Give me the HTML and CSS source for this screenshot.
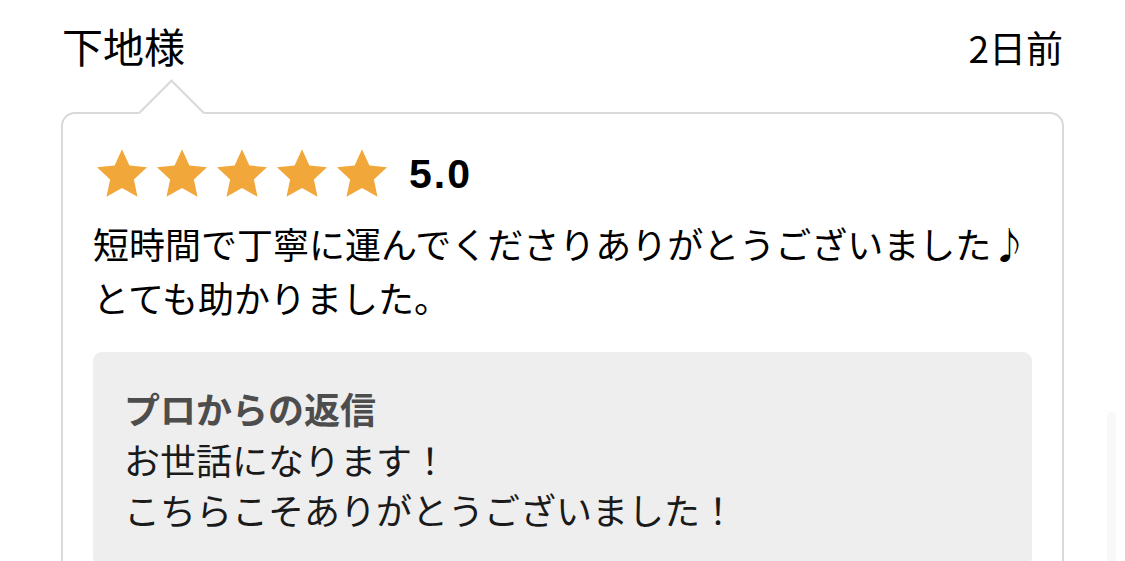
FILE: index.html
```html
<!DOCTYPE html>
<html lang="ja">
<head>
<meta charset="utf-8">
<title>Review</title>
<link rel="stylesheet" href="styles.css">
</head>
<body>
<div class="page">
  <header class="review-head">
    <span class="reviewer">下地様</span>
    <span class="date">2日前</span>
  </header>
  <section class="card">
    <span class="card-arrow"></span>
    <div class="rating">
      <div class="stars">
        <svg class="star" viewBox="1.5 1.5 21 20"><polygon points="12,1.5 15.1,8.3 22.5,9.1 17,14.2 18.5,21.5 12,17.8 5.5,21.5 7,14.2 1.5,9.1 8.9,8.3"/></svg>
        <svg class="star" viewBox="1.5 1.5 21 20"><polygon points="12,1.5 15.1,8.3 22.5,9.1 17,14.2 18.5,21.5 12,17.8 5.5,21.5 7,14.2 1.5,9.1 8.9,8.3"/></svg>
        <svg class="star" viewBox="1.5 1.5 21 20"><polygon points="12,1.5 15.1,8.3 22.5,9.1 17,14.2 18.5,21.5 12,17.8 5.5,21.5 7,14.2 1.5,9.1 8.9,8.3"/></svg>
        <svg class="star" viewBox="1.5 1.5 21 20"><polygon points="12,1.5 15.1,8.3 22.5,9.1 17,14.2 18.5,21.5 12,17.8 5.5,21.5 7,14.2 1.5,9.1 8.9,8.3"/></svg>
        <svg class="star" viewBox="1.5 1.5 21 20"><polygon points="12,1.5 15.1,8.3 22.5,9.1 17,14.2 18.5,21.5 12,17.8 5.5,21.5 7,14.2 1.5,9.1 8.9,8.3"/></svg>
      </div>
      <span class="score">5.0</span>
    </div>
    <p class="comment">短時間で丁寧に運んでくださりありがとうございました♪<br>とても助かりました。</p>
    <div class="reply">
      <p class="reply-title">プロからの返信</p>
      <p class="reply-text">お世話になります！<br>こちらこそありがとうございました！</p>
    </div>
  </section>
</div>
<div class="scroll-indicator"></div>
</body>
</html>
```

FILE: styles.css
```css
html, body {
  margin: 0;
  padding: 0;
  overflow: hidden;
  background: #ffffff;
}

body {
  position: relative;
  height: 561px;
  font-family: "Noto Sans CJK JP", "Noto Sans", sans-serif;
  color: #000000;
}

.page {
  padding: 0 61px;
}

.review-head {
  display: flex;
  justify-content: space-between;
  align-items: baseline;
  height: 78px;
  padding: 0 1px;
}

.reviewer {
  font-size: 41px;
  line-height: 60px;
  padding-top: 15px;
}

.date {
  font-size: 37px;
  line-height: 60px;
}

.card {
  position: relative;
  margin-top: 34px;
  border: 2px solid #d9d9d9;
  border-radius: 14px;
  padding: 35px 30px 40px;
  background: #ffffff;
}

.card-arrow {
  position: absolute;
  top: -25px;
  left: 85px;
  width: 47px;
  height: 47px;
  background: #ffffff;
  border-top: 2px solid #d9d9d9;
  border-left: 2px solid #d9d9d9;
  box-sizing: border-box;
  transform: rotate(45deg);
}

.rating {
  position: relative;
  display: flex;
  align-items: center;
  height: 48px;
  padding-left: 4px;
}

.stars {
  display: flex;
  gap: 10px;
}

.star {
  width: 50px;
  height: 48px;
  fill: #f2a73b;
}

.score {
  margin-left: 22px;
  font-family: "Liberation Sans", Arial, sans-serif;
  font-weight: 700;
  font-size: 41px;
  line-height: 48px;
  letter-spacing: 2px;
  padding-top: 2px;
}

.comment {
  margin: 19px 0 0;
  font-size: 36px;
  line-height: 54px;
  color: #000000;
}

.reply {
  margin-top: 28px;
  background: #eeeeee;
  border-radius: 9px;
  padding: 30px 31px 32px;
}

.reply-title {
  margin: 0;
  font-size: 36px;
  line-height: 52px;
  font-weight: 700;
  color: #4d4d4d;
}

.reply-text {
  margin: 0;
  font-size: 36px;
  line-height: 50px;
  color: #1a1a1a;
}

.scroll-indicator {
  position: absolute;
  right: 9px;
  top: 412px;
  width: 9px;
  height: 160px;
  border-radius: 4px;
  background: #f8f8f8;
}
```
